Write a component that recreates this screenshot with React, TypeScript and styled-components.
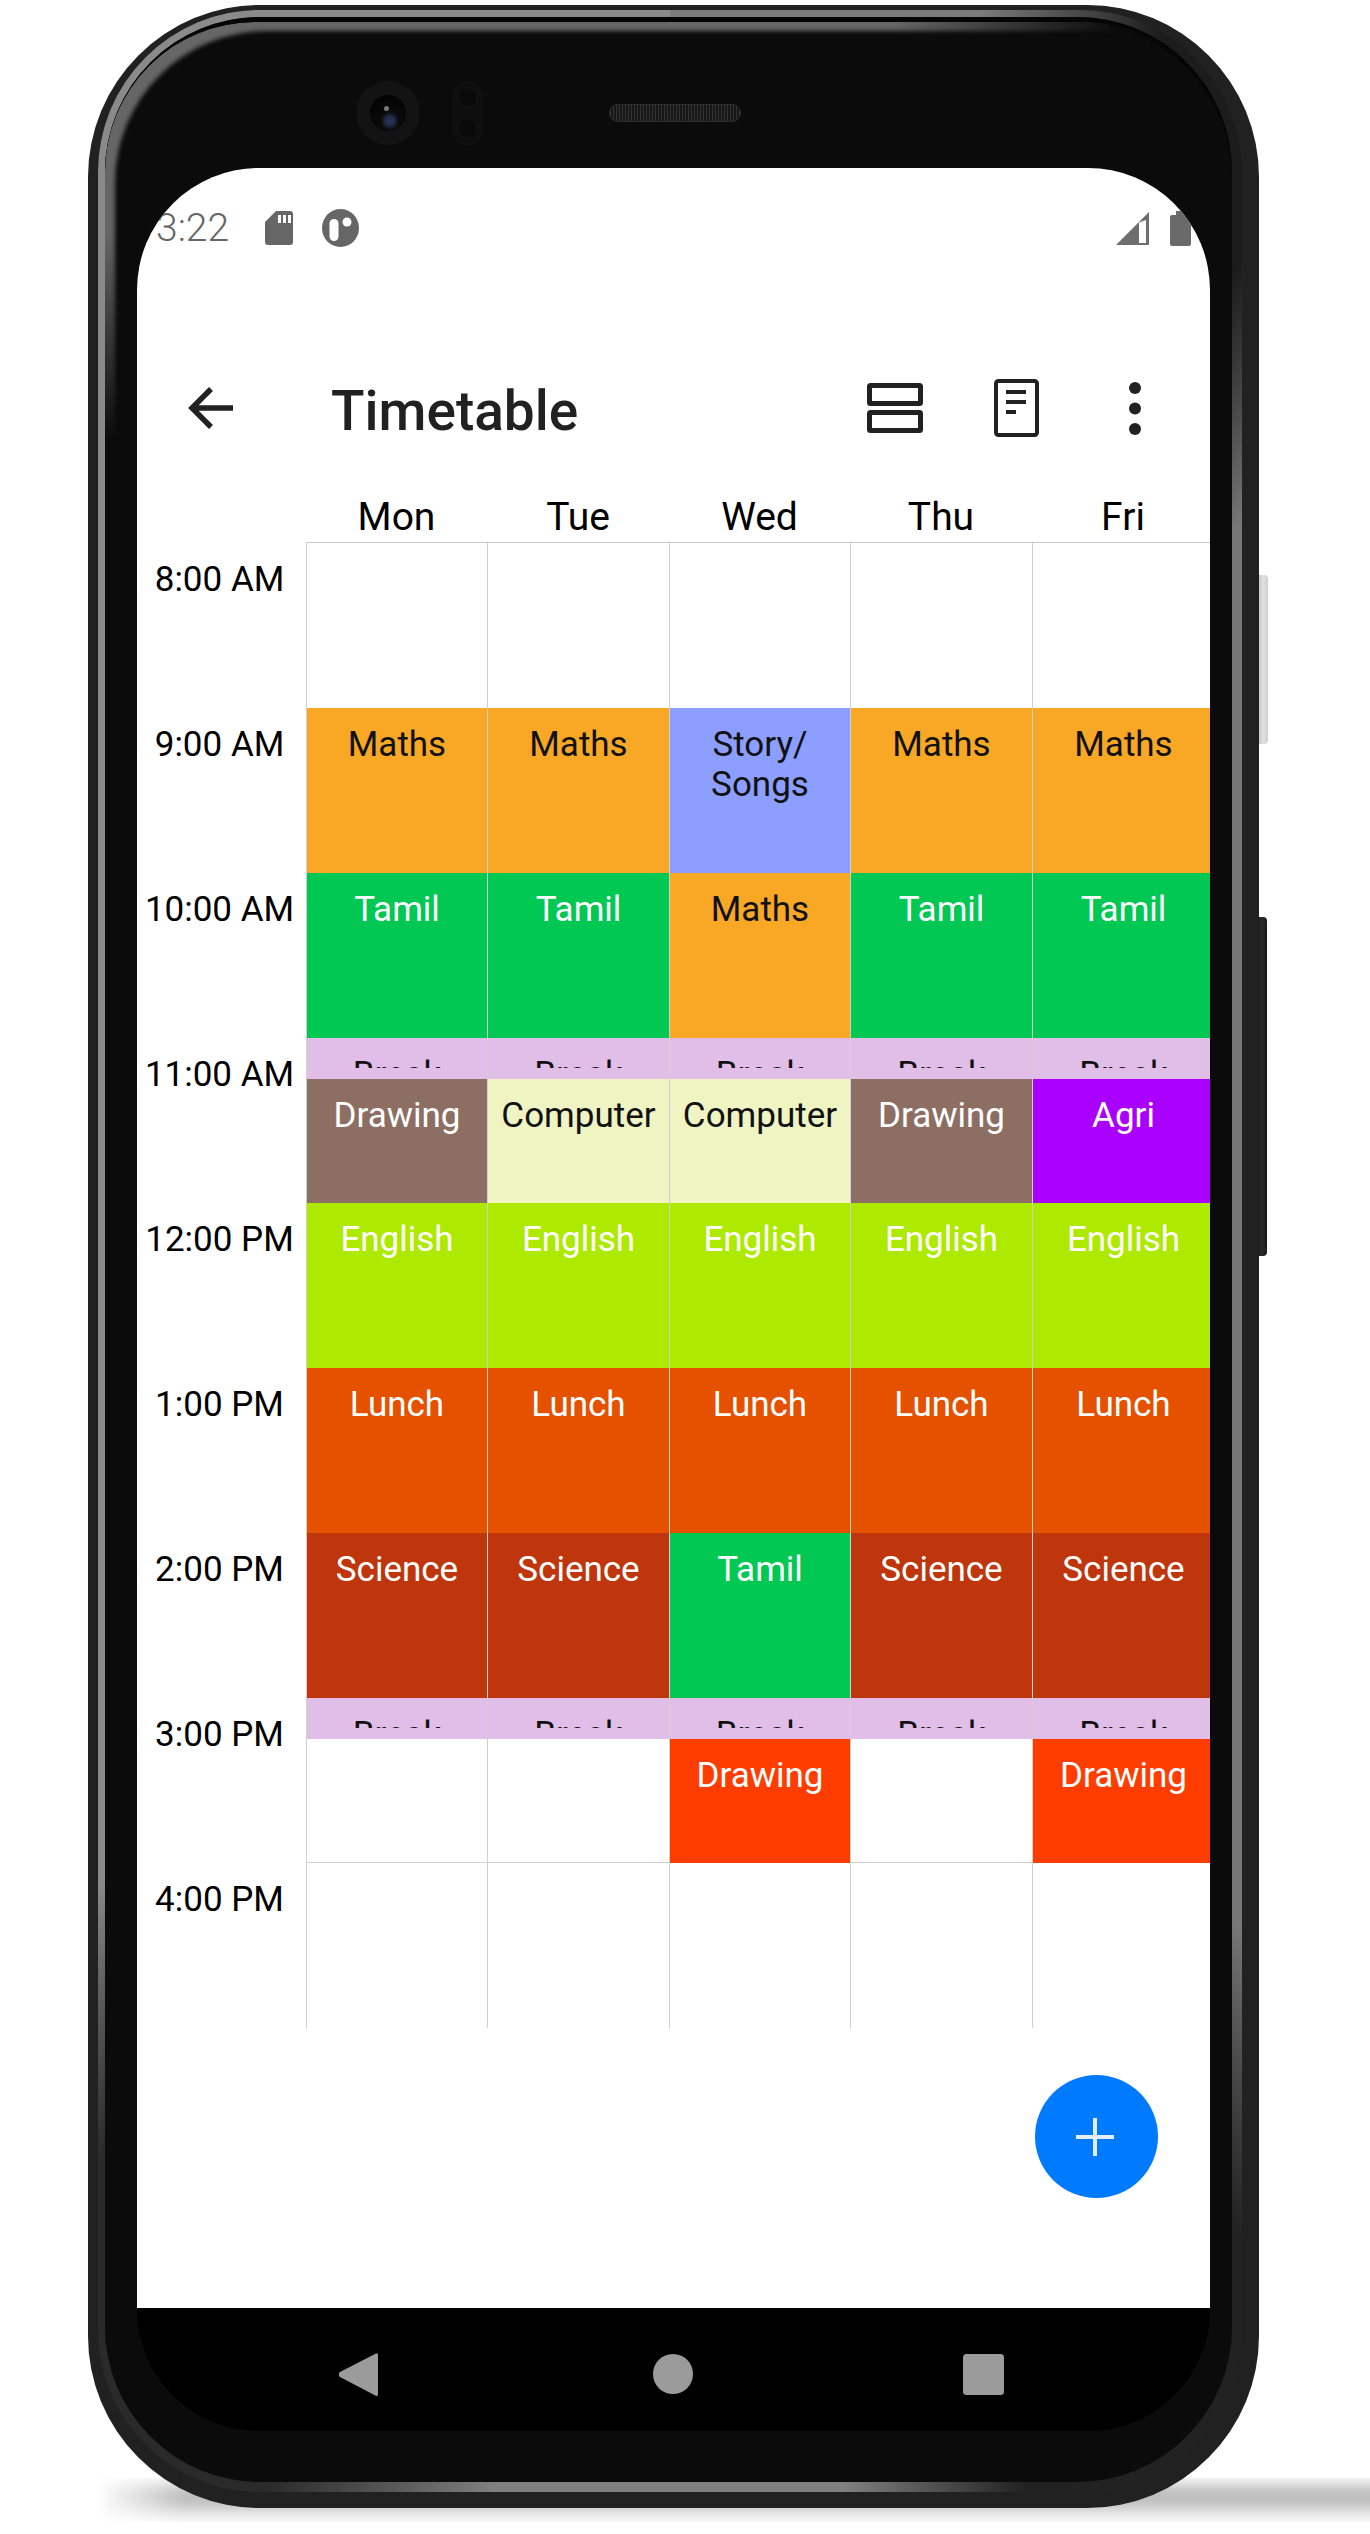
import * as React from 'react';
import styled, { createGlobalStyle } from 'styled-components';

const GlobalStyle = createGlobalStyle`
	html, body {
		margin: 0;
		padding: 0;
		background: #FFFFFF;
		font-family: Roboto, "Liberation Sans", sans-serif;
	}
`;

const Page = styled.div`
	position: relative;
	width: 1370px;
	height: 2534px;
	padding: 5px 0 0 88px;
	box-sizing: border-box;
	overflow: hidden;
`;

const FloorShadow = styled.div`
	position: absolute;
	left: 95px;
	right: -60px;
	top: 2478px;
	height: 44px;
	background: linear-gradient(180deg, rgba(130,130,130,0) 0%, #b0b0b0 35%, #c0c0c0 55%, rgba(255,255,255,0) 100%);
	filter: blur(7px);
	-webkit-mask-image: linear-gradient(90deg, transparent 0, #000 90px);
	mask-image: linear-gradient(90deg, transparent 0, #000 90px);
`;

const SideButton = styled.div<{ $top: number; $height: number; $silver?: boolean }>`
	position: absolute;
	left: ${p => (p.$silver ? 1258 : 1256)}px;
	top: ${p => p.$top}px;
	width: ${p => (p.$silver ? 10 : 11)}px;
	height: ${p => p.$height}px;
	border-radius: 0 4px 4px 0;
	background: ${p => (p.$silver ? 'linear-gradient(90deg, #c2c2c2, #e2e2e2 50%, #cfcfcf)' : 'linear-gradient(90deg, #111, #2b2b2b 50%, #1a1a1a)')};
`;

const Shell = styled.div`
	position: relative;
	width: 1171px;
	height: 2503px;
	padding: 5px 17px 16px 10px;
	box-sizing: border-box;
	border-radius: 172px;
	background: #212121;
`;

const Rim = styled.div`
	width: 100%;
	height: 100%;
	padding: 7px 10px 10px 7px;
	box-sizing: border-box;
	border-radius: 162px;
	background: conic-gradient(
		#7c7c7c 0deg,
		#7c7c7c 14deg,
		#1c1c1c 22deg,
		#1c1c1c 30deg,
		#777777 38deg,
		#777777 140deg,
		#222222 150deg,
		#222222 164deg,
		#808080 172deg,
		#808080 188deg,
		#2a2a2a 198deg,
		#2a2a2a 212deg,
		#8a8a8a 222deg,
		#8a8a8a 360deg
	);
`;

const Glass = styled.div`
	position: relative;
	display: flex;
	flex-direction: column;
	width: 100%;
	height: 100%;
	padding: 0 22px 51px 32px;
	box-sizing: border-box;
	border-radius: 155px;
	background: #0b0b0b;
	box-shadow: inset 0 5px 0 #050505;

	&::before {
		content: '';
		position: absolute;
		left: 0;
		right: 0;
		top: 5px;
		height: 420px;
		border-radius: 150px 150px 0 0;
		box-shadow: inset 12px 11px 4px -2px #666666;
		-webkit-mask-image: linear-gradient(90deg, #000 70%, transparent 90%), linear-gradient(180deg, #000 50%, transparent 100%);
		-webkit-mask-composite: source-in;
		mask-image: linear-gradient(90deg, #000 70%, transparent 90%), linear-gradient(180deg, #000 50%, transparent 100%);
		mask-composite: intersect;
	}
`;

const TopBezel = styled.div`
	position: relative;
	flex: 0 0 151px;
	display: flex;
	align-items: center;
	padding: 41px 0 0 219px;
	box-sizing: border-box;
`;

const Camera = styled.div`
	position: relative;
	width: 64px;
	height: 64px;
	border-radius: 50%;
	background: #131313;
	&::before {
		content: '';
		position: absolute;
		inset: 14px;
		border-radius: 50%;
		background: radial-gradient(circle at 55% 72%, #262f52 0 11%, #0a0a0a 28%, #000 100%);
	}
	&::after {
		content: '';
		position: absolute;
		left: 28px;
		top: 25px;
		width: 5px;
		height: 5px;
		border-radius: 50%;
		background: #7a7a7a;
	}
`;

const Sensor = styled.div`
	display: flex;
	flex-direction: column;
	align-items: center;
	justify-content: space-around;
	width: 29px;
	height: 63px;
	margin-left: 33px;
	border-radius: 14px;
	background: #0e0e0e;
	border: 1px solid #151515;
	box-sizing: border-box;
`;

const SensorDot = styled.div`
	width: 21px;
	height: 21px;
	border-radius: 50%;
	background: #0a0a0a;
	border: 1px solid #171717;
	box-sizing: border-box;
`;

const Speaker = styled.div`
	width: 132px;
	height: 18px;
	margin-left: 127px;
	border-radius: 9px;
	border: 1px solid #2c2c2c;
	box-sizing: border-box;
	background: #1c1c1c repeating-linear-gradient(90deg, #333 0 1px, #161616 1px 3px);
`;

const Display = styled.div`
	position: relative;
	flex: 1;
	display: flex;
	flex-direction: column;
	min-height: 0;
	border-radius: 122px;
	overflow: hidden;
	background: #000000;
`;

const Screen = styled.div`
	position: relative;
	flex: 1;
	background: #FFFFFF;
`;

const StatusBar = styled.div`
	display: flex;
	align-items: center;
	height: 120px;
	margin-bottom: 34px;
	padding: 0 19px;
	color: #666666;
`;

const Clock = styled.span`
	font-size: 39px;
	font-weight: 300;
	margin-right: 36px;
`;

const StatusIcon = styled.svg<{ $gap?: number; $push?: boolean }>`
	display: block;
	flex: none;
	margin-left: ${p => (p.$push ? 'auto' : `${p.$gap || 0}px`)};
`;

const Toolbar = styled.div`
	display: flex;
	align-items: center;
	height: 172px;
	padding: 0 69px 0 50px;
	color: #212121;
`;

const Title = styled.h1`
	margin: 6px 0 0 98px;
	font-size: 55px;
	font-weight: 500;
	line-height: 60px;
	color: #212121;
`;

const ToolIcon = styled.svg<{ $gap?: number; $push?: boolean }>`
	display: block;
	flex: none;
	margin-left: ${p => (p.$push ? 'auto' : `${p.$gap || 0}px`)};
`;

const HeaderRow = styled.div`
	display: grid;
	grid-template-columns: 169px 181px 182px 181px 182px 182px;
	height: 49px;
`;

const DayName = styled.div`
	padding-top: 1px;
	font-size: 39px;
	line-height: 44px;
	text-align: center;
	color: #000000;
`;

const Grid = styled.div`
	display: grid;
	grid-template-columns: 169px 181px 182px 181px 182px 182px;
`;

const TimeColumn = styled.div`
	display: flex;
	flex-direction: column;
`;

const TimeLabel = styled.div`
	height: 165px;
	padding: 17px 4px 0 0;
	box-sizing: border-box;
	font-size: 35px;
	line-height: 40px;
	text-align: center;
	color: #000000;
`;

const DayColumn = styled.div`
	display: flex;
	flex-direction: column;
	border-top: 1px solid #C8C8C8;
	margin-top: -1px;
`;

const Cell = styled.div<{ $height: number; $bg?: string; $light?: boolean; $ruled?: boolean }>`
	display: flex;
	flex-direction: column;
	height: ${p => p.$height}px;
	padding: 17px 0 11px;
	box-sizing: border-box;
	border-left: 1px solid #D0D0D0;
	border-bottom: ${p => (p.$ruled ? '1px solid #D0D0D0' : 'none')};
	background: ${p => p.$bg || 'transparent'};
	color: ${p => (p.$light ? '#FFFFFF' : '#111111')};
	font-size: 35px;
	line-height: 40px;
	text-align: center;
`;

const CellLabel = styled.div`
	flex: 1;
	min-height: 0;
	overflow: hidden;
`;

const Fab = styled.button`
	position: absolute;
	right: 52px;
	bottom: 110px;
	display: flex;
	align-items: center;
	justify-content: center;
	width: 123px;
	height: 123px;
	padding: 0 3px 0 0;
	border: 0;
	border-radius: 50%;
	background: #007AFF;
`;

const NavBar = styled.div`
	flex: 0 0 123px;
	display: flex;
	align-items: center;
	padding: 9px 0 0 202px;
	box-sizing: border-box;
	background: #000000;
`;

const NavIcon = styled.svg<{ $gap?: number }>`
	display: block;
	flex: none;
	margin-left: ${p => p.$gap || 0}px;
`;

const C = {
	maths: { label: 'Maths', bg: '#F9A825' },
	story: { label: 'Story/ Songs', bg: '#8C9EFF' },
	tamil: { label: 'Tamil', bg: '#00C853', light: true },
	brk: { label: 'Break', bg: '#E1BEE7' },
	brown: { label: 'Drawing', bg: '#8D6E63', light: true },
	comp: { label: 'Computer', bg: '#F0F4C3' },
	agri: { label: 'Agri', bg: '#AA00FF', light: true },
	english: { label: 'English', bg: '#AEEA00', light: true },
	lunch: { label: 'Lunch', bg: '#E65100', light: true },
	science: { label: 'Science', bg: '#BF360C', light: true },
	draw: { label: 'Drawing', bg: '#FF3D00', light: true },
};

type Slot = { label: string; bg: string; light?: boolean } | null;

const HEIGHTS = [165, 165, 165, 41, 124, 165, 165, 165, 41, 124, 165];
const TIMES = ['8:00 AM', '9:00 AM', '10:00 AM', '11:00 AM', '12:00 PM', '1:00 PM', '2:00 PM', '3:00 PM', '4:00 PM'];

const DAYS: { name: string; slots: Slot[] }[] = [
	{ name: 'Mon', slots: [null, C.maths, C.tamil, C.brk, C.brown, C.english, C.lunch, C.science, C.brk, null, null] },
	{ name: 'Tue', slots: [null, C.maths, C.tamil, C.brk, C.comp, C.english, C.lunch, C.science, C.brk, null, null] },
	{ name: 'Wed', slots: [null, C.story, C.maths, C.brk, C.comp, C.english, C.lunch, C.tamil, C.brk, C.draw, null] },
	{ name: 'Thu', slots: [null, C.maths, C.tamil, C.brk, C.brown, C.english, C.lunch, C.science, C.brk, null, null] },
	{ name: 'Fri', slots: [null, C.maths, C.tamil, C.brk, C.agri, C.english, C.lunch, C.science, C.brk, C.draw, null] },
];

export default function App() {
	return (
		<Page>
			<GlobalStyle />
			<FloorShadow />
			<SideButton $silver $top={575} $height={169} />
			<SideButton $top={917} $height={339} />
			<Shell>
				<Rim>
					<Glass>
						<TopBezel>
							<Camera />
							<Sensor>
								<SensorDot />
								<SensorDot />
							</Sensor>
							<Speaker />
						</TopBezel>
						<Display>
							<Screen>
								<StatusBar>
									<Clock>3:22</Clock>
									<StatusIcon width="28" height="34" viewBox="0 0 28 34">
										<path d="M11 0H25a3 3 0 0 1 3 3V31a3 3 0 0 1-3 3H3a3 3 0 0 1-3-3V11z" fill="#666" />
										<path d="M13 4h3v8h-3zM18 4h3v8h-3zM23 4h3v8h-3z" fill="#fff" />
									</StatusIcon>
									<StatusIcon $gap={29} width="37" height="38" viewBox="0 0 37 38">
										<ellipse cx="18.5" cy="19" rx="18.5" ry="19" fill="#666" />
										<rect x="7.5" y="10" width="9" height="22" rx="4.5" fill="#fff" />
										<circle cx="25" cy="13" r="4.5" fill="#fff" />
									</StatusIcon>
									<StatusIcon $push width="33" height="33" viewBox="0 0 33 33">
										<path d="M33 0V33H0z" fill="#6e6e6e" />
										<path d="M23 10.5 30 8V31H23z" fill="#fff" />
									</StatusIcon>
									<StatusIcon $gap={21} width="21" height="35" viewBox="0 0 21 35">
										<path d="M6 0H15V4H19a2 2 0 0 1 2 2V33a2 2 0 0 1-2 2H2a2 2 0 0 1-2-2V6a2 2 0 0 1 2-2H6z" fill="#6a6a6a" />
									</StatusIcon>
								</StatusBar>
								<Toolbar>
									<ToolIcon width="46" height="46" viewBox="0 0 46 46">
										<path d="M46 23H5M24 4 5 23 24 42" fill="none" stroke="#212121" strokeWidth="5.5" />
									</ToolIcon>
									<Title>Timetable</Title>
									<ToolIcon $push width="56" height="50" viewBox="0 0 56 50">
										<rect x="2.5" y="2.5" width="51" height="18" rx="1" fill="none" stroke="#212121" strokeWidth="5" />
										<rect x="2.5" y="29.5" width="51" height="18" rx="1" fill="none" stroke="#212121" strokeWidth="5" />
									</ToolIcon>
									<ToolIcon $gap={71} width="45" height="58" viewBox="0 0 45 58">
										<rect x="2" y="2" width="41" height="54" rx="2.5" fill="none" stroke="#212121" strokeWidth="4" />
										<path d="M12 13H32M12 23H32M12 33H22" stroke="#212121" strokeWidth="4" />
									</ToolIcon>
									<ToolIcon $gap={90} width="12" height="53" viewBox="0 0 12 53">
										<circle cx="6" cy="6" r="6" fill="#212121" />
										<circle cx="6" cy="26.5" r="6" fill="#212121" />
										<circle cx="6" cy="47" r="6" fill="#212121" />
									</ToolIcon>
								</Toolbar>
								<HeaderRow>
									<div />
									{DAYS.map(day => (
										<DayName key={day.name}>{day.name}</DayName>
									))}
								</HeaderRow>
								<Grid>
									<TimeColumn>
										{TIMES.map(time => (
											<TimeLabel key={time}>{time}</TimeLabel>
										))}
									</TimeColumn>
									{DAYS.map(day => (
										<DayColumn key={day.name}>
											{day.slots.map((slot, i) => (
												<Cell
													key={i}
													$height={HEIGHTS[i]}
													$bg={slot ? slot.bg : undefined}
													$light={slot ? slot.light : false}
													$ruled={!slot && i === 9}
												>
													<CellLabel>{slot ? slot.label : ''}</CellLabel>
												</Cell>
											))}
										</DayColumn>
									))}
								</Grid>
								<Fab>
									<svg width="38" height="38" viewBox="0 0 38 38">
										<path d="M19 0V38M0 19H38" stroke="#E3EDFB" strokeWidth="4" />
									</svg>
								</Fab>
							</Screen>
							<NavBar>
								<NavIcon width="39" height="45" viewBox="0 0 39 45">
									<path d="M37 1.5a1.5 1.5 0 0 1 2 1.2V42.5a1.5 1.5 0 0 1-2.2 1.2L1 25a3 3 0 0 1 0-5z" fill="#9B9B9B" />
								</NavIcon>
								<NavIcon $gap={275} width="40" height="40" viewBox="0 0 40 40">
									<circle cx="20" cy="20" r="20" fill="#9B9B9B" />
								</NavIcon>
								<NavIcon $gap={270} width="41" height="41" viewBox="0 0 41 41">
									<rect width="41" height="41" rx="3.5" fill="#9B9B9B" />
								</NavIcon>
							</NavBar>
						</Display>
					</Glass>
				</Rim>
			</Shell>
		</Page>
	);
}
